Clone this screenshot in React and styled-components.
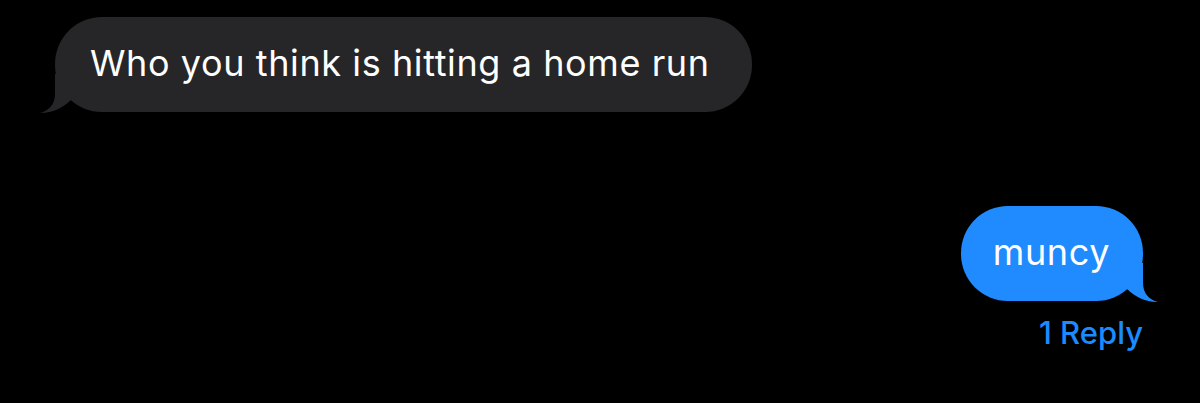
import React from "react";
import styled, { createGlobalStyle } from "styled-components";

const Global = createGlobalStyle`
  html, body { margin: 0; padding: 0; background: #000; }
  body { font-family: Inter, "Noto Sans", sans-serif; -webkit-font-smoothing: antialiased; }
`;

const Screen = styled.div`
  width: 1200px;
  height: 403px;
  background: #000;
  display: flex;
  flex-direction: column;
  box-sizing: border-box;
  padding: 17px 57px 0 55px;
`;

const Row = styled.div`
  display: flex;
  justify-content: ${(p) => (p.$out ? "flex-end" : "flex-start")};
  margin-top: ${(p) => p.$gap || 0}px;
`;

const Bubble = styled.div`
  position: relative;
  box-sizing: border-box;
  height: 95px;
  display: flex;
  align-items: center;
  padding: 0 ${(p) => p.$padR}px 4px ${(p) => p.$padL}px;
  border-radius: 47px;
  background: ${(p) => (p.$out ? "#1f8bff" : "#262628")};
  color: #fff;
  font-size: 36px;
  letter-spacing: 0.6px;
  white-space: nowrap;
`;

const Tail = styled.svg`
  position: absolute;
  bottom: -2px;
  ${(p) => (p.$out ? "right: -16px;" : "left: -16px;")}
  width: 40px;
  height: 40px;
`;

const Meta = styled.div`
  display: flex;
  justify-content: flex-end;
  margin-top: 13px;
  padding-right: 0;
  color: #1a8cff;
  font-size: 31px;
  font-weight: 500;
`;

function TailIn() {
  return (
    <Tail viewBox="0 0 40 40">
      <path d="M16 0 L16 20 C16 30 10 37 1 39 C12 39.5 24 34 32 26 L36 18 L36 0 Z" fill="#262628" />
    </Tail>
  );
}

function TailOut() {
  return (
    <Tail $out viewBox="0 0 40 40">
      <path d="M24 0 L24 20 C24 30 30 37 39 39 C28 39.5 16 34 8 26 L4 18 L4 0 Z" fill="#1f8bff" />
    </Tail>
  );
}

export default function App() {
  return (
    <>
      <Global />
      <Screen>
        <Row>
          <Bubble $padL={35} $padR={42}>
            Who you think is hitting a home run
            <TailIn />
          </Bubble>
        </Row>
        <Row $out $gap={94}>
          <Bubble $out $padL={32} $padR={33}>
            muncy
            <TailOut />
          </Bubble>
        </Row>
        <Meta>1 Reply</Meta>
      </Screen>
    </>
  );
}
